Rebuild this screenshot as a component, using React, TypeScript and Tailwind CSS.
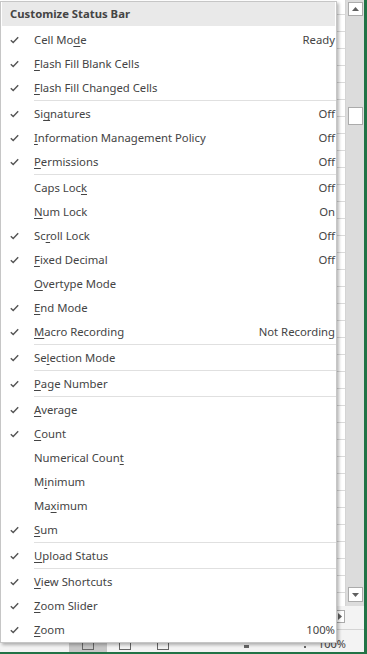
import React from 'react';

type Row = { label: string; u: number; value?: string; checked: boolean } | 'sep';

const rows: Row[] = [
  { label: 'Cell Mode', u: 7, value: 'Ready', checked: true },
  { label: 'Flash Fill Blank Cells', u: 0, checked: true },
  { label: 'Flash Fill Changed Cells', u: 0, checked: true },
  'sep',
  { label: 'Signatures', u: 2, value: 'Off', checked: true },
  { label: 'Information Management Policy', u: 0, value: 'Off', checked: true },
  { label: 'Permissions', u: 0, value: 'Off', checked: true },
  'sep',
  { label: 'Caps Lock', u: 8, value: 'Off', checked: false },
  { label: 'Num Lock', u: 0, value: 'On', checked: false },
  { label: 'Scroll Lock', u: 2, value: 'Off', checked: true },
  { label: 'Fixed Decimal', u: 0, value: 'Off', checked: true },
  { label: 'Overtype Mode', u: 0, checked: false },
  { label: 'End Mode', u: 0, checked: true },
  { label: 'Macro Recording', u: 0, value: 'Not Recording', checked: true },
  'sep',
  { label: 'Selection Mode', u: 2, checked: true },
  'sep',
  { label: 'Page Number', u: 0, checked: true },
  'sep',
  { label: 'Average', u: 0, checked: true },
  { label: 'Count', u: 0, checked: true },
  { label: 'Numerical Count', u: 14, checked: false },
  { label: 'Minimum', u: 1, checked: false },
  { label: 'Maximum', u: 2, checked: false },
  { label: 'Sum', u: 0, checked: true },
  'sep',
  { label: 'Upload Status', u: 0, checked: true },
  'sep',
  { label: 'View Shortcuts', u: 0, checked: true },
  { label: 'Zoom Slider', u: 0, checked: true },
  { label: 'Zoom', u: 0, value: '100%', checked: true },
];

function Check() {
  return (
    <svg width="9" height="8" viewBox="0 0 9 8" className="block">
      <polyline points="0.8,4.2 3.2,6.6 8.2,1.2" fill="none" stroke="#555" strokeWidth="1.4" />
    </svg>
  );
}

function Label({ text, u }: { text: string; u: number }) {
  return (
    <span className="whitespace-pre">
      {text.slice(0, u)}
      <span className="underline decoration-1 underline-offset-2">{text[u]}</span>
      {text.slice(u + 1)}
    </span>
  );
}

function Tri({ dir }: { dir: 'up' | 'down' | 'right' }) {
  if (dir === 'up')
    return (
      <svg width="7" height="4" viewBox="0 0 7 4"><polygon points="0,4 7,4 3.5,0" fill="#606060" /></svg>
    );
  if (dir === 'down')
    return (
      <svg width="7" height="4" viewBox="0 0 7 4"><polygon points="0,0 7,0 3.5,4" fill="#606060" /></svg>
    );
  return (
    <svg width="4" height="7" viewBox="0 0 4 7"><polygon points="0,0 0,7 4,3.5" fill="#606060" /></svg>
  );
}

export default function App() {
  return (
    <div className="relative w-[367px] h-[654px] overflow-hidden bg-white font-['Noto_Sans',sans-serif] text-[#444]">
      <div className="flex flex-col w-full h-full border-r-[3px] border-b-2 border-[#217346]">
        <div className="flex h-[606px]">
          <div className="flex-1 border-r border-[#d4d4d4] bg-white bg-[repeating-linear-gradient(to_bottom,transparent_0px,transparent_14px,#dadada_14px,#dadada_15px,transparent_15px,transparent_17px)]" />
          <div className="w-[18px] bg-[#dcdcdc] flex flex-col items-center">
            <div className="mt-[2px] w-[15px] h-[14px] bg-white border border-[#ababab] flex items-center justify-center">
              <Tri dir="up" />
            </div>
            <div className="mt-[91px] w-[15px] h-[18px] bg-white border border-[#ababab]" />
            <div className="mt-auto mb-[4px] w-[15px] h-[15px] bg-white border border-[#ababab] flex items-center justify-center">
              <Tri dir="down" />
            </div>
          </div>
        </div>
        <div className="flex h-[24px] border-b border-[#d4d4d4]">
          <div className="flex-1 bg-[#f3f3f3] flex items-start justify-end">
            <div className="mt-[4px] w-[11px] h-[13px] bg-white border border-[#ababab] flex items-center justify-center">
              <Tri dir="right" />
            </div>
          </div>
          <div className="w-[19px] bg-[#f3f3f3]" />
        </div>
        <div className="flex-1 bg-[#f3f3f3] flex items-end relative">
          <div className="ml-[69px] w-[38px] h-full bg-[#c6c6c6] flex items-end justify-center pb-[2px]">
            <div className="w-[12px] h-[8px] border border-[#666]" />
          </div>
          <div className="ml-[12px] mb-[2px] w-[12px] h-[8px] border border-[#666]" />
          <div className="ml-[26px] mb-[2px] w-[12px] h-[8px] border border-[#666]" />
          <div className="ml-[75px] mb-[4px] w-[5px] h-[3px] bg-[#666]" />
          <div className="ml-[55px] mb-[4px] w-[2px] h-[2px] bg-[#666]" />
          <span className="ml-auto mr-[18px] mb-[1px] text-[11px] leading-[14px] text-[#444]">100%</span>
        </div>
      </div>

      <div className="absolute left-0 top-[1px] w-[337px] bg-white border border-[#c6c6c6] shadow-[2px_2px_3px_rgba(0,0,0,0.28)] text-[11.3px] leading-none">
        <div className="mx-px h-6 bg-[#e9e9e9] flex items-center pl-[8px] font-bold text-[#444]">
          Customize Status Bar
        </div>
        <div className="mt-[2px]">
          {rows.map((r, i) =>
            r === 'sep' ? (
              <div key={i} className="h-[2px] pl-[33px]">
                <div className="h-px bg-[#e0e0e0]" />
              </div>
            ) : (
              <div key={i} className="h-6 flex items-center">
                <div className="w-[33px] pl-[9px] flex items-center">{r.checked ? <Check /> : null}</div>
                <div className="flex-1"><Label text={r.label} u={r.u} /></div>
                {r.value ? <div className="pr-[1px]">{r.value}</div> : null}
              </div>
            )
          )}
        </div>
      </div>
    </div>
  );
}
